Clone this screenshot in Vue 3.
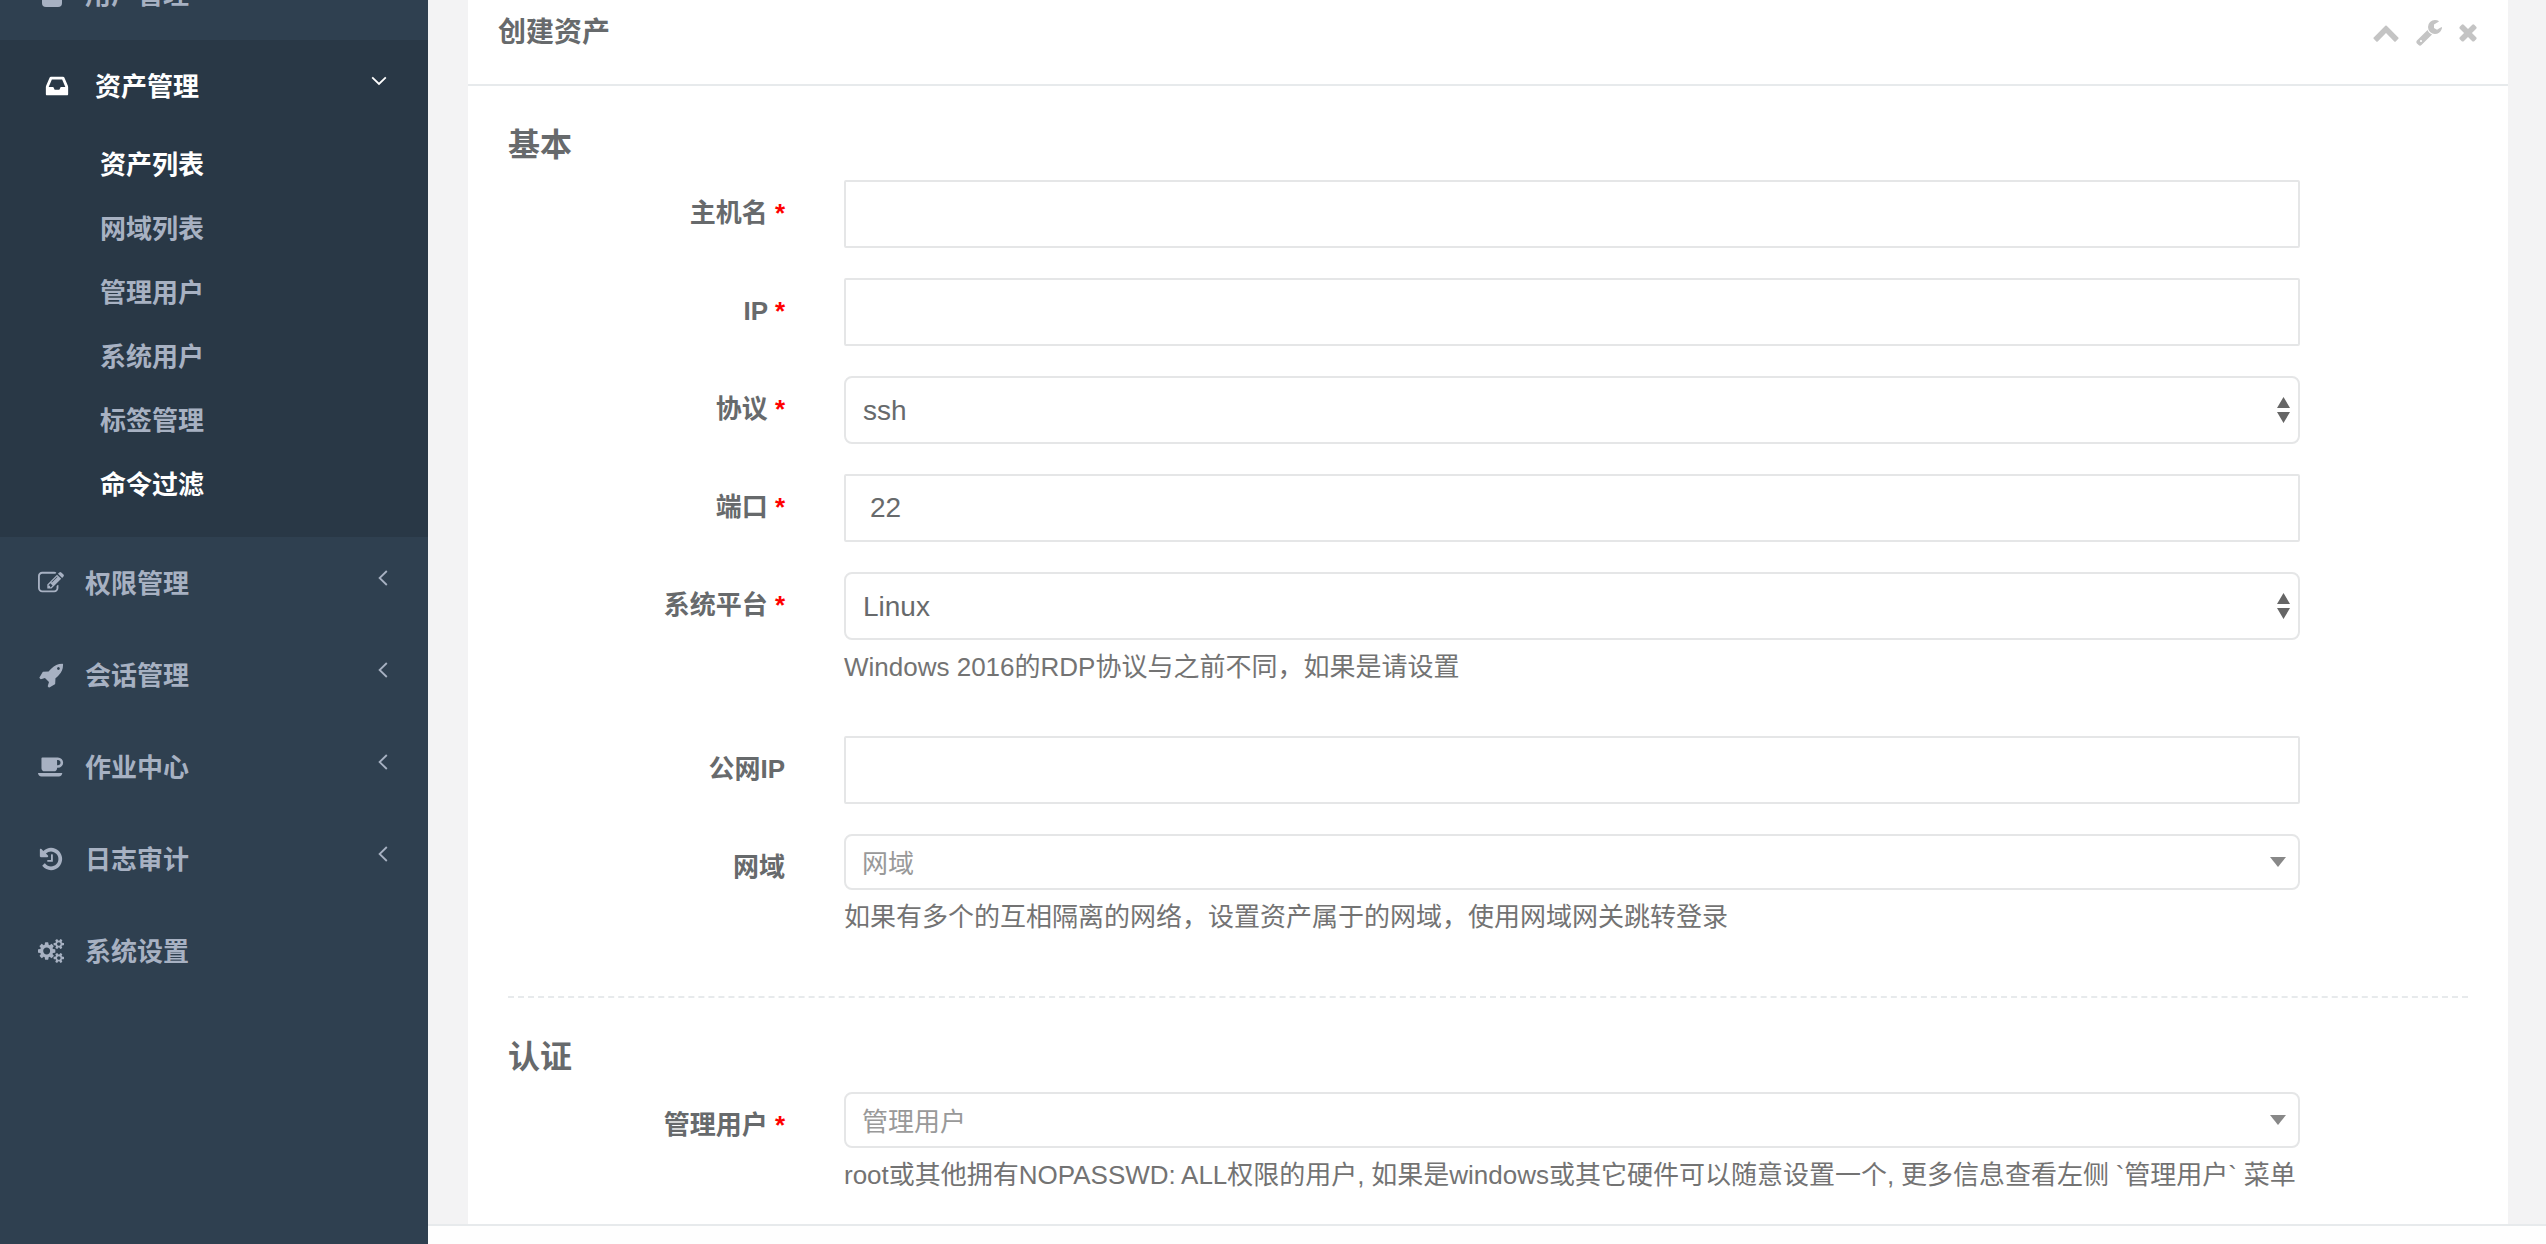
<script setup>
const icons = {
  edit: { box: '0 0 1792 1792', d: 'M888 1184l116-116-152-152-116 116v56h96v96h56zm440-720q-16-16-33 1l-350 350q-17 17-1 33t33-1l350-350q17-17 1-33zm80 594v190q0 119-84.5 203.5t-203.5 84.5h-832q-119 0-203.5-84.5t-84.5-203.5v-832q0-119 84.5-203.5t203.5-84.5h832q63 0 117 25 15 7 18 23 3 17-9 29l-49 49q-14 14-32 8-23-6-45-6h-832q-66 0-113 47t-47 113v832q0 66 47 113t113 47h832q66 0 113-47t47-113v-126q0-13 9-22l64-64q15-15 35-7t20 29zm-96-738l288 288-672 672h-288v-288zm444 132l-92 92-288-288 92-92q28-28 68-28t68 28l152 152q28 28 28 68t-28 68z' },
  rocket: { box: '0 0 1792 1792', d: 'M1504 448q0-40-28-68t-68-28-68 28-28 68 28 68 68 28 68-28 28-68zm224-288q0 249-75.5 430.5t-253.5 360.5q-81 80-195 176l-20 379q-2 16-16 26l-384 224q-7 4-16 4-12 0-23-9l-64-64q-13-14-8-32l85-276-281-281-276 85q-3 1-9 1-14 0-23-9l-64-64q-17-19-5-39l224-384q10-14 26-16l379-20q96-114 176-195 188-187 358-258t431-71q14 0 24 9.5t10 22.5z' },
  coffee: { box: '0 0 1920 1792', d: 'M1664 576q0-80-56-136t-136-56h-64v384h64q80 0 136-56t56-136zm-1664 768h1792q0 106-75 181t-181 75h-1280q-106 0-181-75t-75-181zm1856-768q0 159-112.5 271.5t-271.5 112.5h-64v32q0 92-66 158t-158 66h-704q-92 0-158-66t-66-158v-736q0-26 19-45t45-19h1152q159 0 271.5 112.5t112.5 271.5z' },
  history: { box: '0 0 1792 1792', d: 'M1664 896q0 156-61 298t-164 245-245 164-298 61q-172 0-327-72.5t-264-204.5q-7-10-6.5-22.5t8.5-20.5l137-138q10-9 25-9 16 2 23 12 73 95 179 147t225 52q104 0 198.5-40.5t163.5-109.5 109.5-163.5 40.5-198.5-40.5-198.5-109.5-163.5-163.5-109.5-198.5-40.5q-98 0-188 35.5t-160 101.5l137 138q31 30 14 69-17 40-59 40h-448q-26 0-45-19t-19-45v-448q0-42 40-59 39-17 69 14l130 129q107-101 244.5-156.5t284.5-55.5q156 0 298 61t245 164 164 245 61 298zm-640-288v448q0 14-9 23t-23 9h-320q-14 0-23-9t-9-23v-64q0-14 9-23t23-9h224v-352q0-14 9-23t23-9h64q14 0 23 9t9 23z' },
  cogs: { box: '0 0 1920 1792', d: 'M896 896q0-106-75-181t-181-75-181 75-75 181 75 181 181 75 181-75 75-181zm768 512q0-52-38-90t-90-38-90 38-38 90q0 53 37.5 90.5t90.5 37.5 90.5-37.5 37.5-90.5zm0-1024q0-52-38-90t-90-38-90 38-38 90q0 53 37.5 90.5t90.5 37.5 90.5-37.5 37.5-90.5zm-384 421v185q0 10-7 19.5t-16 10.5l-155 24q-11 35-32 76 34 48 90 115 7 11 7 20 0 12-7 19-23 30-82.5 89.5t-78.5 59.5q-11 0-21-7l-115-90q-37 19-77 31-11 108-23 155-7 24-30 24h-186q-11 0-20-7.5t-10-17.5l-23-153q-34-10-75-31l-118 89q-7 7-20 7-11 0-21-8-144-133-144-160 0-9 7-19 10-14 41-53t47-61q-23-44-35-82l-152-24q-10-1-17-9.5t-7-19.5v-185q0-10 7-19.5t16-10.5l155-24q11-35 32-76-34-48-90-115-7-11-7-20 0-12 7-20 22-30 82-89t79-59q11 0 21 7l115 90q34-18 77-32 11-108 23-154 7-24 30-24h186q11 0 20 7.5t10 17.5l23 153q34 10 75 31l118-89q8-7 20-7 11 0 21 8 144 133 144 160 0 8-7 19-12 16-42 54t-45 60q23 48 34 82l152 23q10 2 17 10.5t7 19.5zm640 533v140q0 16-149 31-12 27-30 52 51 113 51 138 0 4-4 7-122 71-124 71-8 0-46-47t-52-68q-20 2-30 2t-30-2q-14 21-52 68t-46 47q-2 0-124-71-4-3-4-7 0-25 51-138-18-25-30-52-149-15-149-31v-140q0-16 149-31 13-29 30-52-51-113-51-138 0-4 4-7 4-2 35-20t59-34 30-16q8 0 46 46.5t52 67.5q20-2 30-2t30 2q51-71 92-112l6-2q4 0 124 70 4 3 4 7 0 25-51 138 17 23 30 52 149 15 149 31zm0-1024v140q0 16-149 31-12 27-30 52 51 113 51 138 0 4-4 7-122 71-124 71-8 0-46-47t-52-68q-20 2-30 2t-30-2q-14 21-52 68t-46 47q-2 0-124-71-4-3-4-7 0-25 51-138-18-25-30-52-149-15-149-31v-140q0-16 149-31 13-29 30-52-51-113-51-138 0-4 4-7 4-2 35-20t59-34 30-16q8 0 46 46.5t52 67.5q20-2 30-2t30 2q51-71 92-112l6-2q4 0 124 70 4 3 4 7 0 25-51 138 17 23 30 52 149 15 149 31z' }
}

const subItems = [
  { text: '资产列表', active: true },
  { text: '网域列表' },
  { text: '管理用户' },
  { text: '系统用户' },
  { text: '标签管理' },
  { text: '命令过滤', active: true }
]

const navItems = [
  { text: '权限管理', icon: 'edit', arrow: true },
  { text: '会话管理', icon: 'rocket', arrow: true },
  { text: '作业中心', icon: 'coffee', arrow: true },
  { text: '日志审计', icon: 'history', arrow: true },
  { text: '系统设置', icon: 'cogs' }
]
</script>

<template>
  <div class="layout">
    <aside class="sidebar">
      <div class="nav-row nav-first">
        <svg class="nav-icon" viewBox="0 0 26 26"><rect x="4" y="2" width="20" height="24" rx="4" fill="#a7b1c2" /></svg>
        <span class="nav-text">用户管理</span>
      </div>
      <div class="nav-group">
        <div class="nav-row group-head">
          <svg class="head-icon" viewBox="0 0 1792 1792"><path fill="#fff" d="M1151 960h316q-1-3-2.5-8.5t-2.5-7.5l-212-496h-708l-212 496q-1 3-2.5 8.5t-2.5 7.5h316l95 192h320zm513 30v482q0 26-19 45t-45 19h-1408q-26 0-45-19t-19-45v-482q0-62 25-123l238-552q10-25 36.5-42t52.5-17h832q26 0 52.5 17t36.5 42l238 552q25 61 25 123z" /></svg>
          <span class="nav-text">资产管理</span>
          <svg class="angle-down" viewBox="0 0 16 10"><path d="M1.2 1.4 8 8 14.8 1.4" fill="none" stroke="#fff" stroke-width="1.8" /></svg>
        </div>
        <div v-for="item in subItems" :key="item.text" class="sub-row" :class="{ on: item.active }">{{ item.text }}</div>
      </div>
      <div v-for="item in navItems" :key="item.text" class="nav-row">
        <svg class="nav-icon" :viewBox="icons[item.icon].box"><path fill="#a7b1c2" :d="icons[item.icon].d" /></svg>
        <span class="nav-text">{{ item.text }}</span>
        <svg v-if="item.arrow" class="angle-left" viewBox="0 0 10 16"><path d="M8.8 1 1.6 8 8.8 15" fill="none" stroke="#a7b1c2" stroke-width="1.8" /></svg>
      </div>
    </aside>

    <main class="main">
      <div class="content">
        <section class="panel">
          <header class="panel-title">
            <h5>创建资产</h5>
            <div class="tools">
              <svg class="tool-up" viewBox="0 0 1792 1792"><path d="M1683 1331l-166 165q-19 19-45 19t-45-19l-531-531-531 531q-19 19-45 19t-45-19l-166-165q-19-19-19-45.5t19-45.5l742-741q19-19 45-19t45 19l742 741q19 19 19 45.5t-19 45.5z" /></svg>
              <svg class="tool-wrench" viewBox="0 0 1792 1792"><path d="M448 1472q0-26-19-45t-45-19-45 19-19 45 19 45 45 19 45-19 19-45zm644-420l-682 682q-37 37-90 37-52 0-91-37l-106-108q-38-36-38-90 0-53 38-91l681-681q39 98 114.5 173.5t173.5 114.5zm634-435q0 39-23 106-47 134-164.5 217.5t-258.5 83.5q-185 0-316.5-131.5t-131.5-316.5 131.5-316.5 316.5-131.5q58 0 121.5 16.5t107.5 46.5q16 11 16 28t-16 28l-293 169v224l193 107q5-3 79-48.5t135.5-81 70.5-35.5q15 0 23.5 10t8.5 25z" /></svg>
              <svg class="tool-close" viewBox="0 0 1792 1792"><path d="M1490 1322q0 40-28 68l-136 136q-28 28-68 28t-68-28l-294-294-294 294q-28 28-68 28t-68-28l-136-136q-28-28-28-68t28-68l294-294-294-294q-28-28-28-68t28-68l136-136q28-28 68-28t68 28l294 294 294-294q28-28 68-28t68 28l136 136q28 28 28 68t-28 68l-294 294 294 294q28 28 28 68z" /></svg>
            </div>
          </header>

          <form class="panel-body">
            <h3 class="section">基本</h3>

            <div class="row">
              <label>主机名 <i>*</i></label>
              <div><input class="control" type="text" /></div>
            </div>
            <div class="row">
              <label>IP <i>*</i></label>
              <div><input class="control" type="text" /></div>
            </div>
            <div class="row">
              <label>协议 <i>*</i></label>
              <div class="select-wrap">
                <select class="control native"><option>ssh</option></select>
                <svg class="updown" viewBox="0 0 13 26"><path d="M6.5 0 13 11H0zM0 15h13L6.5 26z" /></svg>
              </div>
            </div>
            <div class="row">
              <label>端口 <i>*</i></label>
              <div><input class="control port" type="text" value="22" /></div>
            </div>
            <div class="row">
              <label>系统平台 <i>*</i></label>
              <div>
                <div class="select-wrap">
                  <select class="control native"><option>Linux</option></select>
                  <svg class="updown" viewBox="0 0 13 26"><path d="M6.5 0 13 11H0zM0 15h13L6.5 26z" /></svg>
                </div>
                <p class="help">Windows 2016的RDP协议与之前不同，如果是请设置</p>
              </div>
            </div>
            <div class="row">
              <label>公网IP</label>
              <div><input class="control" type="text" /></div>
            </div>
            <div class="row">
              <label>网域</label>
              <div>
                <div class="picker">
                  <span>网域</span>
                  <svg viewBox="0 0 16 10"><path d="M0 0h16L8 10z" /></svg>
                </div>
                <p class="help">如果有多个的互相隔离的网络，设置资产属于的网域，使用网域网关跳转登录</p>
              </div>
            </div>

            <div class="divider"></div>

            <h3 class="section">认证</h3>

            <div class="row">
              <label>管理用户 <i>*</i></label>
              <div>
                <div class="picker">
                  <span>管理用户</span>
                  <svg viewBox="0 0 16 10"><path d="M0 0h16L8 10z" /></svg>
                </div>
                <p class="help tight">root或其他拥有NOPASSWD: ALL权限的用户, 如果是windows或其它硬件可以随意设置一个, 更多信息查看左侧 `管理用户` 菜单</p>
              </div>
            </div>
          </form>
        </section>
      </div>
      <footer class="footer"></footer>
    </main>
  </div>
</template>

<style>
html, body { margin: 0; overflow: hidden; }
</style>

<style scoped>
.layout {
  display: flex;
  height: 1244px;
  overflow: hidden;
  background: #f3f3f4;
  color: #676a6c;
  font-family: "Liberation Sans", "Noto Sans CJK SC", sans-serif;
}

.sidebar {
  width: 428px;
  flex: none;
  background: #2f4050;
  color: #a7b1c2;
  font-size: 26px;
  font-weight: 700;
}
.nav-row {
  display: flex;
  align-items: center;
  height: 92px;
  padding: 0 40px 0 38px;
  box-sizing: border-box;
}
.nav-text { margin-bottom: 4px; }
.nav-first { margin-top: -52px; }
.nav-icon {
  width: 26px;
  height: 26px;
  flex: none;
  margin-right: 21px;
}
.angle-left {
  width: 10px;
  height: 16px;
  margin-left: auto;
  margin-bottom: 10px;
}
.nav-group {
  background: #293846;
  padding-bottom: 21px;
}
.group-head {
  color: #fff;
  padding-left: 44px;
  padding-right: 41px;
}
.head-icon {
  width: 26px;
  height: 26px;
  margin-right: 25px;
  flex: none;
}
.angle-down {
  width: 16px;
  height: 10px;
  margin-left: auto;
  margin-bottom: 10px;
}
.sub-row {
  height: 64px;
  line-height: 67px;
  padding-left: 100px;
}
.sub-row.on { color: #fff; }

.main {
  flex: 1;
  min-width: 0;
  display: flex;
  flex-direction: column;
}
.content {
  flex: 1;
  min-height: 0;
  padding: 0 38px 0 40px;
  display: flex;
}
.panel {
  flex: 1;
  min-width: 0;
  background: #fff;
  overflow: hidden;
}
.footer {
  height: 20px;
  box-sizing: border-box;
  border-top: 2px solid #e7eaec;
  background: #fefefe;
}
.panel-title {
  height: 86px;
  box-sizing: border-box;
  border-bottom: 2px solid #e7eaec;
  display: flex;
  align-items: flex-start;
  justify-content: space-between;
  padding: 13px 27px 0 30px;
}
.panel-title h5 {
  margin: 0;
  font-size: 28px;
  line-height: 40px;
  font-weight: 700;
}
.tools {
  display: flex;
  align-items: center;
  height: 40px;
  margin-top: -1px;
  fill: #c4c4c4;
}
.tool-up { width: 28px; height: 28px; margin-right: 15px; }
.tool-wrench { width: 28px; height: 28px; margin-right: 12px; }
.tool-close { width: 26px; height: 26px; }

.panel-body { padding: 0 40px; }
.section {
  margin: 0;
  padding: 41px 0 17px;
  font-size: 32px;
  line-height: 36px;
  font-weight: 700;
}
.row {
  display: grid;
  grid-template-columns: 277px 1456px;
  column-gap: 59px;
  margin-bottom: 30px;
}
.row label {
  font-size: 26px;
  line-height: 66px;
  font-weight: 700;
  text-align: right;
}
.row label i {
  color: #f00;
  font-style: normal;
}
.control {
  display: block;
  width: 100%;
  height: 68px;
  box-sizing: border-box;
  margin: 0;
  padding: 0 17px;
  border: 2px solid #e5e6e7;
  border-radius: 2px;
  background: #fff;
  color: #676a6c;
  font: inherit;
  font-size: 28px;
  outline: none;
}
.port { padding-left: 24px; }
.native {
  appearance: none;
  -webkit-appearance: none;
  border-radius: 8px;
}
.select-wrap { position: relative; }
.updown {
  position: absolute;
  right: 10px;
  top: 21px;
  width: 13px;
  height: 26px;
  fill: #666;
}
.picker {
  height: 56px;
  box-sizing: border-box;
  border: 2px solid #e5e6e7;
  border-radius: 8px;
  padding: 0 12px 2px 16px;
  display: flex;
  align-items: center;
  justify-content: space-between;
  font-size: 26px;
  color: #999;
}
.picker svg {
  width: 16px;
  height: 10px;
  margin-top: 2px;
  fill: #888;
}
.help {
  margin: 9px 0 21px;
  font-size: 26px;
  line-height: 36px;
  color: #737373;
}
.tight { word-spacing: -0.5px; }
.row:last-child .help { margin-bottom: 0; }
.divider {
  height: 0;
  margin-top: 40px;
  border-top: 2px dashed #e7eaec;
}
</style>
